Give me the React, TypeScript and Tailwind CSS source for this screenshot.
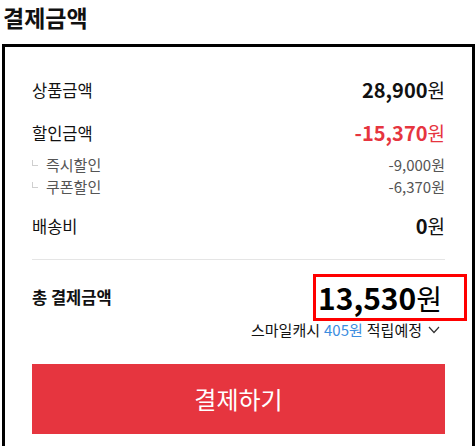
import React from "react";

const font = { fontFamily: '"Noto Sans CJK KR", "Noto Sans", sans-serif' };

function Row({ label, value, red }: { label: string; value: string; red?: boolean }) {
  return (
    <div className="flex h-[24px] items-center justify-between">
      <span className="text-[16.5px] text-[#111]">{label}</span>
      <span className={red ? "text-[#e6353f]" : "text-[#111]"}>
        <span className="text-[20px] font-bold">{value}</span>
        <span className="text-[19px]">원</span>
      </span>
    </div>
  );
}

function SubRow({ label, value }: { label: string; value: string }) {
  return (
    <div className="flex h-[22px] items-center justify-between">
      <span className="flex items-center text-[15px] text-[#555]">
        <span className="mr-[8px] inline-block h-[6px] w-[6px] -translate-y-[2px] border-b border-l border-[#cfcfcf]" />
        {label}
      </span>
      <span className="text-[15px] text-[#555]">{value}</span>
    </div>
  );
}

export default function App() {
  return (
    <div className="min-h-[446px] w-[476px] overflow-hidden bg-white" style={font}>
      <h1 className="pl-[3px] pt-[1px] text-[23px] font-bold leading-[32px] text-[#111]">결제금액</h1>
      <div className="ml-[2px] mt-[11px] w-[473px] border-[3px] border-b-0 border-black px-[27px] pt-[31px] pb-[12px]">
        <Row label="상품금액" value="28,900" />
        <div className="mt-[19px]">
          <Row label="할인금액" value="-15,370" red />
        </div>
        <div className="mt-[9px]">
          <SubRow label="즉시할인" value="-9,000원" />
          <SubRow label="쿠폰할인" value="-6,370원" />
        </div>
        <div className="mt-[16px]">
          <Row label="배송비" value="0" />
        </div>
        <div className="mt-[21px] h-px bg-[#e5e5e5]" />
        <div className="mt-[17px] flex h-[40px] items-center justify-between">
          <span className="text-[16.5px] font-bold text-[#111]">총 결제금액</span>
          <span className="relative pr-[3px] text-[#000]">
            <span className="text-[30px] font-bold">13,530</span>
            <span className="text-[28px]">원</span>
            <span className="pointer-events-none absolute -bottom-[1px] -left-[5px] -right-[22px] -top-[1px] border-[3px] border-[#ff0000]" />
          </span>
        </div>
        <div className="mt-[3px] flex h-[20px] items-center justify-end pr-[5px] text-[15px] text-[#111]">
          <span>스마일캐시</span>
          <span className="ml-[4px] text-[#3b8de0]">405원</span>
          <span className="ml-[4px]">적립예정</span>
          <svg className="ml-[6px]" width="12" height="8" viewBox="0 0 12 8" fill="none">
            <polyline points="1,1 6,6.5 11,1" stroke="#333" strokeWidth="1.2" />
          </svg>
        </div>
        <button className="mt-[24px] flex h-[70px] w-full items-center justify-center bg-[#e6353f] text-[24px] text-white">
          결제하기
        </button>
      </div>
    </div>
  );
}
